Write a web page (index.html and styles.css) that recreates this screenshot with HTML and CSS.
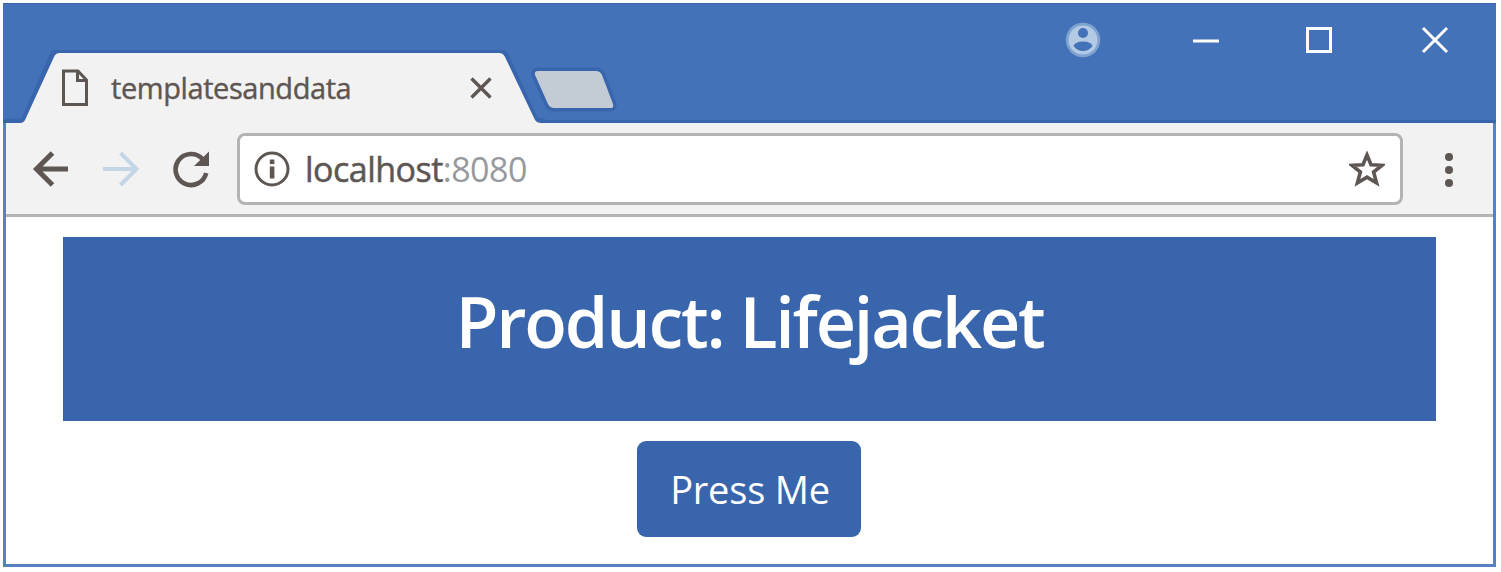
FILE: index.html
```html
<!DOCTYPE html>
<html lang="en">
<head>
<meta charset="utf-8">
<title>templatesanddata</title>
<link rel="stylesheet" href="styles.css">
</head>
<body>
<div class="window">
  <header class="titlebar">
    <div class="tab">
      <svg class="tab-shape" width="540" height="76" viewBox="0 0 540 76">
        <path class="tab-edge" d="M0 71H15Q18 71 19.500 68L47 5Q49 1.500 53 1.500H495Q499 1.500 501 5L530 68Q531.500 71 535 71H540"/>
        <path class="tab-fill" d="M1 73H15Q18.500 73 20 70L49 7Q50.500 3 55 3H494Q498 3 500 7L530 70Q532 73 536 73H540V76H1Z"/>
      </svg>
      <svg class="file-icon" width="28" height="38" viewBox="0 0 28 38"><path d="M2.500 2H17L25.500 11V35.500H2.500Z"/><path d="M16.500 2V11.500H25.500"/></svg>
      <span class="tab-title">templatesanddata</span>
      <svg class="tab-close" width="22" height="22" viewBox="0 0 22 22"><path d="M1.500 1.500L20.500 20.500M20.500 1.500L1.500 20.500"/></svg>
    </div>
    <svg class="new-tab" width="88" height="46" viewBox="0 0 88 46"><path d="M8 4H66Q70 4 72 8L83 37Q84 41 81 41H24Q20 41 18 37L5 8Q4 4 8 4Z"/></svg>
    <div class="window-controls">
      <svg width="36" height="36" viewBox="0 0 36 36"><circle cx="18" cy="18" r="17.300" fill="#7ea3d1"/><circle cx="18" cy="18" r="14.500" fill="#b3cae5"/><circle cx="18" cy="11" r="5" fill="#4472b8"/><path d="M8.500 24Q10 19.500 18 19.500T27.500 24Q24 29 18 29T8.500 24Z" fill="#4472b8"/></svg>
      <svg class="line" width="28" height="28" viewBox="0 0 28 28"><path d="M1 15H27"/></svg>
      <svg class="line" width="28" height="28" viewBox="0 0 28 28"><path d="M2.500 2.500H25.500V25.500H2.500Z"/></svg>
      <svg class="line" width="28" height="28" viewBox="0 0 28 28"><path d="M2 2L26 26M26 2L2 26"/></svg>
    </div>
  </header>
  <nav class="toolbar">
    <svg class="nav-icon" width="38" height="38" viewBox="0 0 38 38"><path d="M36 19H4M20.500 3L4.500 19L20.500 35"/></svg>
    <svg class="nav-icon forward" width="38" height="38" viewBox="0 0 38 38"><path d="M1 19H34M18.500 3L34.500 19L18.500 35"/></svg>
    <svg class="nav-icon reload" width="38" height="38" viewBox="0 0 38 38"><path d="M30.500 9A15.500 15.500 0 1 0 34.200 23"/><path class="solid" d="M37 1.500V16H22Z"/></svg>
    <div class="address">
      <svg width="36" height="36" viewBox="0 0 36 36"><circle cx="18" cy="18" r="16" fill="none" stroke="#5e5653" stroke-width="3"/><rect x="15.800" y="15.500" width="4.600" height="12" fill="#5e5653"/><rect x="15.800" y="8.500" width="4.600" height="4.600" fill="#5e5653"/></svg>
      <span class="url">localhost<span class="port">:8080</span></span>
      <svg class="star" width="36" height="36" viewBox="0 0 36 36"><path d="M18 4L22 13.700L33 14.300L24.600 21L27.600 32L18 26.200L8.400 32L11.400 21L3 14.300L14 13.700Z"/></svg>
    </div>
    <svg class="menu" width="10" height="36" viewBox="0 0 10 36"><circle cx="5" cy="5" r="4"/><circle cx="5" cy="18" r="4"/><circle cx="5" cy="31" r="4"/></svg>
  </nav>
  <main class="page">
    <h1 class="banner">Product: Lifejacket</h1>
    <button class="press">Press Me</button>
  </main>
</div>
</body>
</html>
```
FILE: styles.css
```css
* { box-sizing: border-box; }
body { margin: 0; background: #fff; font-family: "Open Sans", "Noto Sans", sans-serif; overflow: hidden; }
svg { display: block; flex: none; fill: none; }
.window { width: 1493px; height: 564px; margin: 3px 0 0 3px; display: flex; flex-direction: column; border: solid #5583c2; border-width: 0 3px 3px; }
.titlebar { flex: none; height: 120px; margin: 0 -3px; padding-left: 2px; display: flex; background: #4472b8; border-top: 1px solid #3965ad; border-bottom: 3px solid #3965ad; }
.tab { position: relative; width: 540px; height: 76px; margin-top: 46px; padding-left: 56px; display: flex; align-items: center; flex: none; }
.tab-shape { position: absolute; left: 0; top: 0; }
.tab-edge { stroke: #3965ad; stroke-width: 5; }
.tab-fill { fill: #f2f2f2; }
.file-icon { position: relative; stroke: #5e5653; stroke-width: 3; }
.tab-title { position: relative; width: 359px; margin-left: 22px; padding-bottom: 1px; font-size: 29px; line-height: 40px; letter-spacing: -0.42px; color: #5e5653; -webkit-text-stroke: 0.4px #5e5653; white-space: nowrap; }
.tab-close { position: relative; stroke: #5e5653; stroke-width: 3.400; }
.new-tab { margin: 63px 0 0 -15px; }
.new-tab path { fill: #c3cbd5; stroke: #3965ad; stroke-width: 7; paint-order: stroke; }
.window-controls { display: flex; align-items: flex-start; margin: 18px 47px 0 auto; }
.window-controls .line { margin: 4px 0 0 87px; stroke: #fff; stroke-width: 3; }
.window-controls svg:nth-child(2) { margin-left: 91px; }
.window-controls svg:nth-child(3) { margin-left: 85px; }
.window-controls svg:nth-child(4) { margin-left: 88px; }
.toolbar { flex: none; height: 94px; padding: 10px 39px 0 26px; display: flex; background: #f2f2f2; border-bottom: 3px solid #b3b3b3; }
.nav-icon { margin: 17px 32px 0 0; stroke: #5e5653; stroke-width: 5; }
.nav-icon.forward { stroke: #c5d5e8; stroke-width: 4; }
.nav-icon.reload { stroke-width: 4.600; margin-right: 27px; }
.nav-icon .solid { fill: #5e5653; stroke: none; }
.address { width: 1166px; height: 72px; padding: 0 15px 0 14px; display: flex; align-items: center; border: 3px solid #b3b3b3; border-radius: 8px; background: #fff; }
.url { margin-left: 15px; font-size: 34px; line-height: 48px; letter-spacing: -0.52px; color: #5e5653; -webkit-text-stroke: 0.5px #5e5653; white-space: nowrap; }
.port { color: #98999d; -webkit-text-stroke: 0; }
.star { margin-left: auto; stroke: #5e5653; stroke-width: 3.600; }
.menu { margin: 19px 0 0 auto; fill: #5e5653; }
.page { flex: 1; padding: 20px 57px 0; display: flex; flex-direction: column; align-items: center; background: #fff; }
.banner { width: 100%; height: 184px; margin: 0 0 20px; padding-top: 34px; background: #3965ad; color: #fff; text-align: center; font-size: 70px; line-height: 100px; letter-spacing: -2.200px; font-weight: 600; white-space: nowrap; }
.press { width: 224px; height: 96px; margin-right: 1px; padding: 0 0 0 2px; border: 0; border-radius: 9px; background: #3965ad; color: #fff; font: 38px/54px "Open Sans", "Noto Sans", sans-serif; letter-spacing: -0.200px; white-space: nowrap; }
```
